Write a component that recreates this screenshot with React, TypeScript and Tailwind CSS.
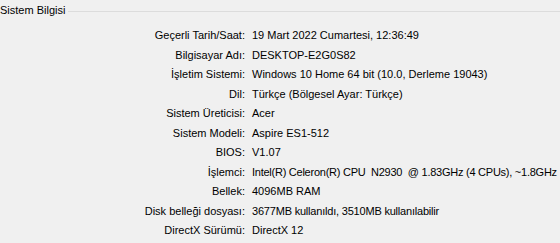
import React from "react";

const rows: [string, string, string][] = [
  ["Geçerli Tarih/Saat:", "19 Mart 2022 Cumartesi, 12:36:49", ""],
  ["Bilgisayar Adı:", "DESKTOP-E2G0S82", ""],
  ["İşletim Sistemi:", "Windows 10 Home 64 bit (10.0, Derleme 19043)", ""],
  ["Dil:", "Türkçe (Bölgesel Ayar: Türkçe)", ""],
  ["Sistem Üreticisi:", "Acer", ""],
  ["Sistem Modeli:", "Aspire ES1-512", ""],
  ["BIOS:", "V1.07", ""],
  ["İşlemci:", "Intel(R) Celeron(R) CPU  N2930  @ 1.83GHz (4 CPUs), ~1.8GHz", "tracking-[-0.25px]"],
  ["Bellek:", "4096MB RAM", ""],
  ["Disk belleği dosyası:", "3677MB kullanıldı, 3510MB kullanılabilir", "tracking-[-0.2px]"],
  ["DirectX Sürümü:", "DirectX 12", ""],
];

export default function App() {
  return (
    <div
      className="w-[560px] h-[243px] bg-[#f0f0f0] text-black text-[11px] leading-[13px] overflow-hidden"
      style={{ fontFamily: '"Liberation Sans", Arial, sans-serif' }}
    >
      <div className="flex items-center pt-[4px]">
        <span className="pr-[3px]">Sistem Bilgisi</span>
        <div className="flex-1 h-px bg-[#dcdcdc] mt-[1px]" />
      </div>
      <div className="mt-[12px] flex flex-col gap-[6.5px]">
        {rows.map(([k, v, t]) => (
          <div key={k} className="flex whitespace-pre">
            <div className="w-[245px] shrink-0 text-right">{k}</div>
            <div className={"pl-[7px] min-w-0 " + t}>{v}</div>
          </div>
        ))}
      </div>
    </div>
  );
}
